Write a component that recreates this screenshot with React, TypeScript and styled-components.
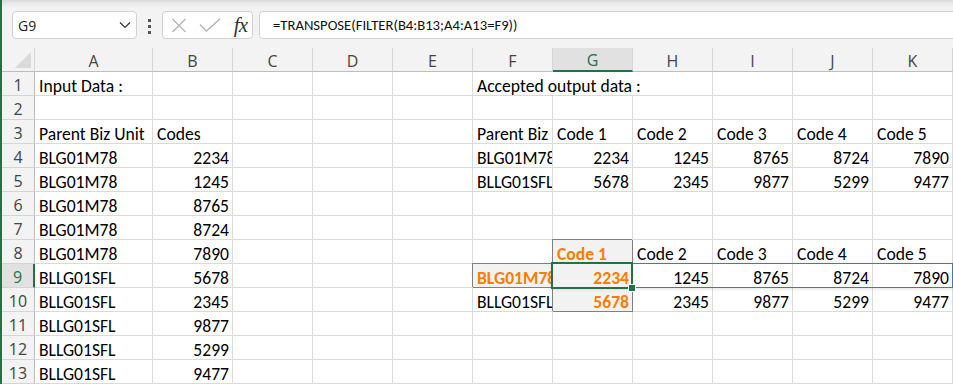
import React from "react"
import styled, { createGlobalStyle, css } from "styled-components"

const colors = {
  green: "#217346",
  grid: "#dadada",
  headBg: "#f3f3f3",
  headActive: "#e1e1e1",
  headLine: "#d4d4d4",
  headText: "#444444",
  boxBorder: "#d1d1d1",
  orange: "#fa7d00",
  calcBg: "#f2f2f2",
  calcBorder: "#7f7f7f",
  blue: "#4472c4",
  iconGray: "#b4b4b4",
}

const cellFont = `Calibri, Carlito, "Open Sans", sans-serif`

const GlobalStyle = createGlobalStyle`
  html, body {
    margin: 0;
    padding: 0;
    background: #ffffff;
    overflow: hidden;
  }
`

const Window = styled.div`
  width: 953px;
  height: 384px;
  box-sizing: border-box;
  border-left: 2px solid ${colors.green};
  display: flex;
  flex-direction: column;
  overflow: hidden;
  font-family: "Open Sans", "Noto Sans", sans-serif;
`

/* formula bar */
const Toolbar = styled.div`
  height: 48px;
  flex: none;
  box-sizing: border-box;
  display: flex;
  align-items: flex-start;
  padding: 11px 0 0 10px;
  background: linear-gradient(to bottom, #d9d9d9 0, #e8e8e8 3px, #f3f3f3 8px);
`

const Box = styled.div`
  height: 28px;
  box-sizing: border-box;
  background: #ffffff;
  border: 1px solid ${colors.boxBorder};
  border-radius: 4px;
  display: flex;
  align-items: center;
`

const NameBox = styled(Box)`
  width: 125px;
  padding: 0 5px 0 5px;
  justify-content: space-between;
  font-size: 14px;
  color: #222;
`

const Dots = styled.div`
  width: 3px;
  margin: 8px 11px 0 11px;
  display: flex;
  flex-direction: column;
  gap: 3px;

  span {
    width: 3px;
    height: 3px;
    background: #555;
  }
`

const FxBox = styled(Box)`
  width: 91px;
  padding: 0 5px 0 8px;
  gap: 12px;
`

const FxLabel = styled.span`
  margin-left: auto;
  font-family: "Liberation Serif", "DejaVu Serif", serif;
  font-style: italic;
  font-size: 21px;
  color: #333;
  letter-spacing: -1px;
`

const FormulaBox = styled(Box)`
  flex: 1;
  margin: 0 -6px 0 6px;
  padding-left: 13px;
  font-family: ${cellFont};
  font-size: 14.67px;
  color: #111;
  border-radius: 4px 0 0 4px;
`

/* sheet */
const Sheet = styled.div`
  position: relative;
  display: grid;
  grid-template-columns: 33px 118px repeat(10, 80px);
  grid-template-rows: repeat(14, 24px);
  color: #000;
`

const Corner = styled.div`
  box-sizing: border-box;
  background: ${colors.headBg};
  border-right: 1px solid ${colors.headLine};
  border-bottom: 1px solid #bdbdbd;
  display: flex;
  align-items: flex-end;
  justify-content: flex-end;
  padding: 0 3px 3px 0;
`

const ColHead = styled.div<{ $active?: boolean }>`
  box-sizing: border-box;
  background: ${colors.headBg};
  border-right: 1px solid ${colors.headLine};
  border-bottom: 1px solid #bdbdbd;
  display: flex;
  align-items: center;
  justify-content: center;
  padding-top: 2px;
  font-size: 16px;
  color: ${colors.headText};

  ${(p) =>
    p.$active &&
    css`
      background: ${colors.headActive};
      border-bottom: 2px solid ${colors.green};
      color: ${colors.green};
    `}
`

const RowHead = styled.div<{ $active?: boolean }>`
  box-sizing: border-box;
  background: ${colors.headBg};
  border-right: 1px solid #bdbdbd;
  border-bottom: 1px solid ${colors.headLine};
  display: flex;
  align-items: center;
  justify-content: center;
  padding-top: 2px;
  font-size: 16px;
  color: ${colors.headText};

  ${(p) =>
    p.$active &&
    css`
      background: ${colors.headActive};
      border-right: 2px solid ${colors.green};
      color: ${colors.green};
    `}
`

const Cell = styled.div<{ $num?: boolean; $calc?: boolean; $span?: number; $clip?: boolean }>`
  box-sizing: border-box;
  border-right: 1px solid ${colors.grid};
  border-bottom: 1px solid ${colors.grid};
  display: flex;
  align-items: flex-end;
  justify-content: ${(p) => (p.$num ? "flex-end" : "flex-start")};
  padding: 0 3px 0 4px;
  font-family: ${cellFont};
  font-size: 17.6px;
  line-height: 17px;
  white-space: nowrap;
  overflow: ${(p) => (p.$clip ? "hidden" : "visible")};
  grid-column: span ${(p) => p.$span ?? 1};

  ${(p) =>
    p.$calc &&
    css`
      background: ${colors.calcBg};
      border-color: ${colors.calcBorder};
      box-shadow: -1px -1px 0 0 ${colors.calcBorder};
      color: ${colors.orange};
      font-weight: 700;
    `}
`

const SpillRange = styled.div`
  position: absolute;
  grid-row: 10 / 11;
  grid-column: 8 / 13;
  top: -1px;
  left: -1px;
  right: 0;
  bottom: 0;
  border: 1px solid ${colors.blue};
  box-shadow: 0 1px 4px rgba(0, 0, 0, 0.12);
  pointer-events: none;
`

const ActiveCell = styled.div`
  position: absolute;
  grid-row: 10 / 11;
  grid-column: 8 / 9;
  top: -2px;
  left: -2px;
  right: 0;
  bottom: -1px;
  border: 2px solid ${colors.green};
  pointer-events: none;
`

const FillHandle = styled.span`
  position: absolute;
  right: -5px;
  bottom: -5px;
  width: 6px;
  height: 6px;
  background: ${colors.green};
  border: 1px solid #ffffff;
`

type CellData = { v: string; num?: boolean; calc?: boolean; span?: number; clip?: boolean } | null

const t = (v: string, extra: Partial<Exclude<CellData, null>> = {}): CellData => ({ v, ...extra })
const n = (v: string, extra: Partial<Exclude<CellData, null>> = {}): CellData => ({ v, num: true, ...extra })
const blank = (count: number): CellData[] => Array.from({ length: count }, () => null)

const columns = ["A", "B", "C", "D", "E", "F", "G", "H", "I", "J", "K"]

const rows: CellData[][] = [
  [t("Input Data :"), null, null, null, null, t("Accepted output data :", { span: 3 }), null, null],
  blank(11),
  [t("Parent Biz Unit"), t("Codes"), null, null, null, t("Parent Biz Unit", { clip: true }), t("Code 1"), t("Code 2"), t("Code 3"), t("Code 4"), t("Code 5")],
  [t("BLG01M78"), n("2234"), null, null, null, t("BLG01M78", { clip: true }), n("2234"), n("1245"), n("8765"), n("8724"), n("7890")],
  [t("BLG01M78"), n("1245"), null, null, null, t("BLLG01SFL", { clip: true }), n("5678"), n("2345"), n("9877"), n("5299"), n("9477")],
  [t("BLG01M78"), n("8765"), ...blank(9)],
  [t("BLG01M78"), n("8724"), ...blank(9)],
  [t("BLG01M78"), n("7890"), null, null, null, null, t("Code 1", { calc: true }), t("Code 2"), t("Code 3"), t("Code 4"), t("Code 5")],
  [t("BLLG01SFL"), n("5678"), null, null, null, t("BLG01M78", { calc: true, clip: true }), n("2234", { calc: true }), n("1245"), n("8765"), n("8724"), n("7890")],
  [t("BLLG01SFL"), n("2345"), null, null, null, t("BLLG01SFL", { clip: true }), n("5678", { calc: true }), n("2345"), n("9877"), n("5299"), n("9477")],
  [t("BLLG01SFL"), n("9877"), ...blank(9)],
  [t("BLLG01SFL"), n("5299"), ...blank(9)],
  [t("BLLG01SFL"), n("9477"), ...blank(9)],
]

const Chevron = () => (
  <svg width="12" height="8" viewBox="0 0 12 8">
    <path d="M1 1.5 L6 6.5 L11 1.5" fill="none" stroke="#333" strokeWidth="1.2" />
  </svg>
)

const CancelIcon = () => (
  <svg width="16" height="15" viewBox="0 0 16 15">
    <path d="M1.5 1 L14.5 14 M14.5 1 L1.5 14" fill="none" stroke={colors.iconGray} strokeWidth="1.3" />
  </svg>
)

const EnterIcon = () => (
  <svg width="22" height="14" viewBox="0 0 22 14">
    <path d="M1 6.5 L7.5 13 L21 0.8" fill="none" stroke={colors.iconGray} strokeWidth="1.3" />
  </svg>
)

const CornerMark = () => (
  <svg width="16" height="16" viewBox="0 0 16 16">
    <path d="M16 0 L16 16 L0 16 Z" fill="#dadada" />
  </svg>
)

export default function App() {
  return (
    <>
      <GlobalStyle />
      <Window>
        <Toolbar>
          <NameBox>
            <span>G9</span>
            <Chevron />
          </NameBox>
          <Dots>
            <span />
            <span />
            <span />
          </Dots>
          <FxBox>
            <CancelIcon />
            <EnterIcon />
            <FxLabel>fx</FxLabel>
          </FxBox>
          <FormulaBox>=TRANSPOSE(FILTER(B4:B13;A4:A13=F9))</FormulaBox>
        </Toolbar>

        <Sheet>
          <Corner>
            <CornerMark />
          </Corner>
          {columns.map((c) => (
            <ColHead key={c} $active={c === "G"}>
              {c}
            </ColHead>
          ))}

          {rows.map((row, r) => {
            const cells: React.ReactNode[] = []
            let col = 0
            row.forEach((cell, i) => {
              if (col >= columns.length) return
              const span = cell?.span ?? 1
              cells.push(
                <Cell
                  key={`${r}-${i}`}
                  $num={cell?.num}
                  $calc={cell?.calc}
                  $span={span}
                  $clip={cell?.clip}
                >
                  {cell?.v}
                </Cell>
              )
              col += span
            })
            while (col < columns.length) {
              cells.push(<Cell key={`${r}-pad-${col}`} />)
              col += 1
            }
            return (
              <React.Fragment key={r}>
                <RowHead $active={r === 8}>{r + 1}</RowHead>
                {cells}
              </React.Fragment>
            )
          })}

          <SpillRange />
          <ActiveCell>
            <FillHandle />
          </ActiveCell>
        </Sheet>
      </Window>
    </>
  )
}
